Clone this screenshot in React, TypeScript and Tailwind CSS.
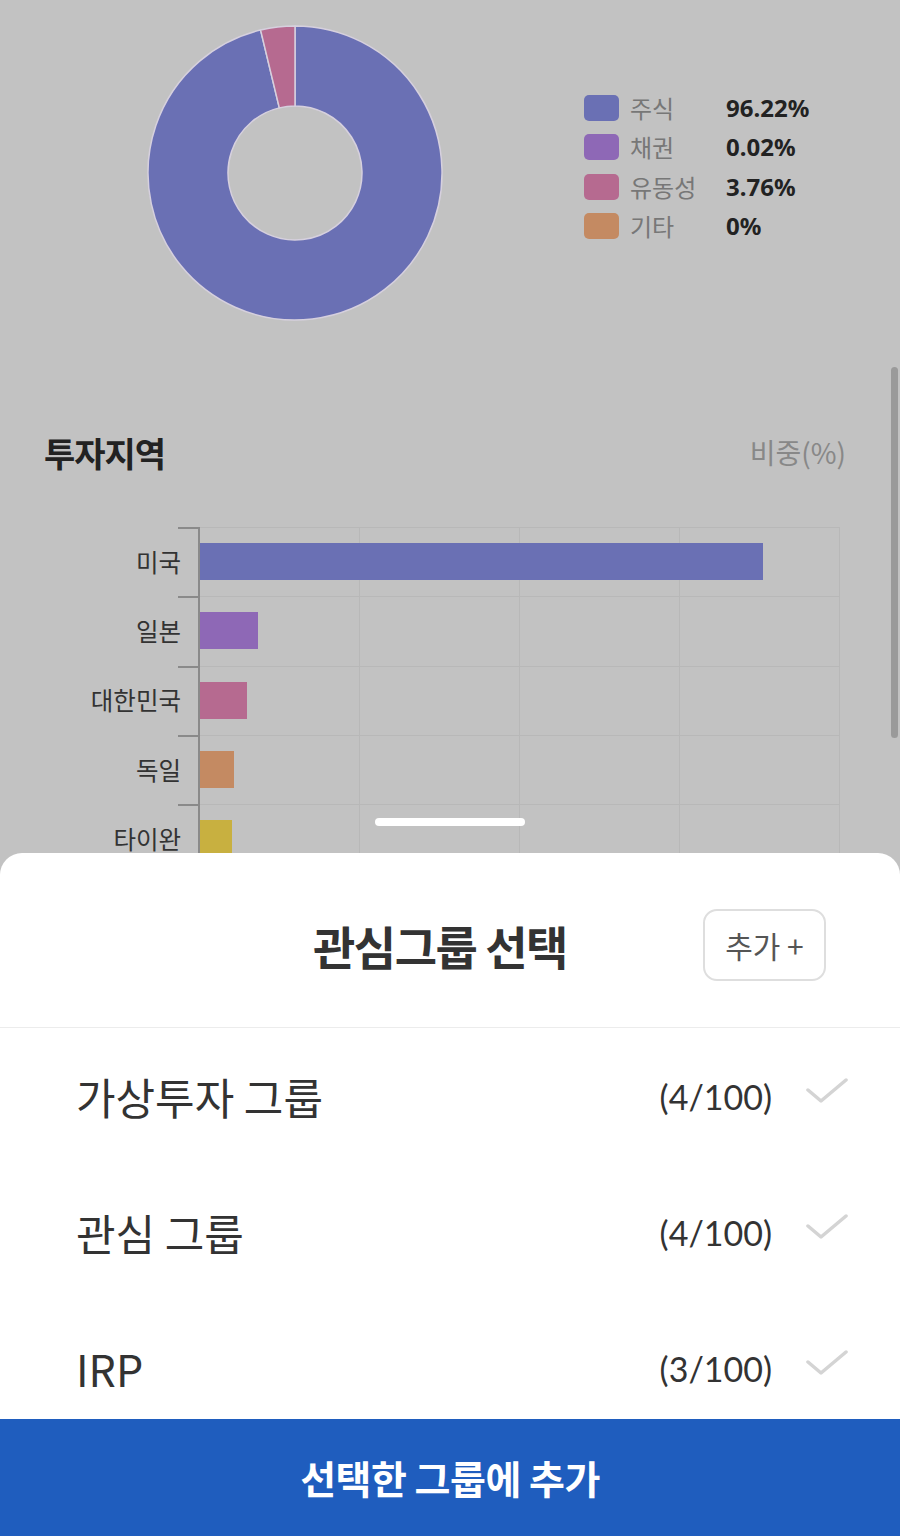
import { useState } from 'react';

const KR = { fontFamily: '"Noto Sans CJK KR", "Noto Sans", sans-serif' };
const NUM = { fontFamily: 'Lato, "Noto Sans CJK KR", sans-serif' };

const assets = [
  { label: '주식', value: '96.22%', color: 'bg-[#6a70b4]' },
  { label: '채권', value: '0.02%', color: 'bg-[#8e68b6]' },
  { label: '유동성', value: '3.76%', color: 'bg-[#b66a90]' },
  { label: '기타', value: '0%', color: 'bg-[#c48a62]' },
];

const regions = [
  { name: '미국', width: 563, color: 'bg-[#6a70b4]' },
  { name: '일본', width: 58, color: 'bg-[#8e68b6]' },
  { name: '대한민국', width: 47, color: 'bg-[#b66a90]' },
  { name: '독일', width: 34, color: 'bg-[#c48a62]' },
  { name: '타이완', width: 32, color: 'bg-[#c8b040]' },
];

const groups = [
  { name: '가상투자 그룹', count: '(4/100)' },
  { name: '관심 그룹', count: '(4/100)' },
  { name: 'IRP', count: '(3/100)' },
];

function Donut() {
  return (
    <svg width="296" height="296" viewBox="-1 -1 296 296">
      <path
        d="M147,0 A147,147 0 1 1 112.59,4.09 L131.32,81.86 A67,67 0 1 0 147,80 Z"
        fill="#6a70b4"
        stroke="#d6d0de"
        strokeWidth="1.5"
      />
      <path
        d="M112.59,4.09 A147,147 0 0 1 147,0 L147,80 A67,67 0 0 0 131.32,81.86 Z"
        fill="#b66a90"
        stroke="#d6d0de"
        strokeWidth="1.5"
      />
    </svg>
  );
}

function Check() {
  return (
    <svg width="42" height="28" viewBox="0 0 42 28" className="mb-[10px]">
      <polyline points="2,13 15,24 40,3" fill="none" stroke="#d4d4d4" strokeWidth="3.5" strokeLinecap="round" strokeLinejoin="round" />
    </svg>
  );
}

export default function App() {
  const [selected] = useState<number | null>(null);

  return (
    <div className="relative h-[1536px] w-[900px] overflow-hidden bg-[#c2c2c2]" style={KR}>
      {/* dimmed page behind the sheet */}
      <div className="relative h-[853px] overflow-hidden">
        <div className="flex items-start pl-[147px] pt-[25px]">
          <Donut />
          <div className="ml-[141px] mt-[63px]">
            {assets.map((a) => (
              <div key={a.label} className="flex h-[39.5px] items-center">
                <div className={`h-[26px] w-[35px] rounded-[5px] ${a.color}`} />
                <span className="ml-[11px] w-[96px] text-[24px] text-[#777]">{a.label}</span>
                <span className="text-[24px] font-bold text-[#222]" style={{ fontFamily: '"Noto Sans", sans-serif' }}>
                  {a.value}
                </span>
              </div>
            ))}
          </div>
        </div>

        <div className="mt-[109px] flex h-[44px] items-center justify-between pl-[44px] pr-[54px]">
          <h2 className="text-[34px] font-bold tracking-[-1px] text-[#222]">투자지역</h2>
          <span className="text-[28px] text-[#888]">비중(%)</span>
        </div>

        <div className="mt-[53px]">
          {regions.map((r) => (
            <div key={r.name} className="flex h-[69.3px]">
              <div className="relative flex w-[198px] items-center justify-end pr-[17px]">
                <div className="absolute right-0 top-0 h-[2px] w-[20px] bg-[#8a8a8a]" />
                <span className="text-[24.5px] leading-[26px] text-[#333]">{r.name}</span>
              </div>
              <div className="relative w-[642px] border-l-2 border-[#8a8a8a]">
                <div className="absolute inset-0 grid grid-cols-4">
                  <div className="border-r border-t border-[#b8b8b8]" />
                  <div className="border-r border-t border-[#b8b8b8]" />
                  <div className="border-r border-t border-[#b8b8b8]" />
                  <div className="border-r border-t border-[#b8b8b8]" />
                </div>
                <div className={`relative mt-[16px] h-[37px] ${r.color}`} style={{ width: r.width }} />
              </div>
            </div>
          ))}
        </div>

        <div className="absolute left-[375px] top-[818px] h-[8px] w-[150px] rounded-full bg-white" />
      </div>

      <div className="absolute right-[2px] top-[367px] h-[371px] w-[7px] rounded-full bg-[#9a9a9a]" />

      {/* bottom sheet */}
      <div className="relative flex h-[683px] flex-col rounded-t-[22px] bg-white">
        <div className="flex items-center border-b border-[#ececec] pb-[46px] pt-[56px]">
          <h1 className="ml-[313px] text-[46px] font-bold tracking-[-1.5px] text-[#333]">관심그룹 선택</h1>
          <button className="ml-auto mr-[74px] flex h-[72px] w-[123px] items-center justify-center rounded-[14px] border-2 border-[#dedede] text-[30px] text-[#555]">
            추가 +
          </button>
        </div>

        <div className="h-[391px] overflow-hidden">
          {groups.map((g, i) => (
            <div key={g.name} className="flex h-[136px] items-center pl-[76px] pr-[52px]">
              <span className={`flex-1 text-[43px] ${selected === i ? 'text-[#1f5dbe]' : 'text-[#333]'}`}>{g.name}</span>
              <span className="text-[34px] text-[#333]" style={NUM}>{g.count}</span>
              <div className="ml-[34px]">
                <Check />
              </div>
            </div>
          ))}
        </div>

        <button className="flex flex-1 items-center justify-center bg-[#1f5dbe] text-[39px] font-bold tracking-[-0.5px] text-white">
          선택한 그룹에 추가
        </button>
      </div>
    </div>
  );
}
